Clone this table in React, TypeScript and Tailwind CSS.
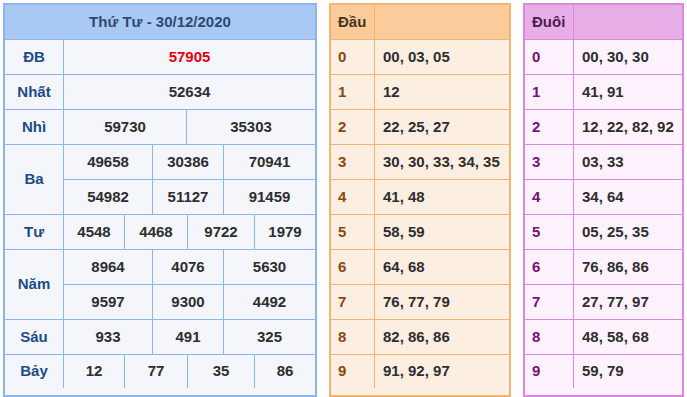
// Kết quả xổ số — Thứ Tư 30/12/2020
const font = { fontFamily: '"Liberation Sans", Arial, sans-serif' };

type Cell = { v: string; w: number };

const rows: { label: string; lines: Cell[][] }[] = [
  { label: "ĐB", lines: [[{ v: "57905", w: 251 }]] },
  { label: "Nhất", lines: [[{ v: "52634", w: 251 }]] },
  { label: "Nhì", lines: [[{ v: "59730", w: 123 }, { v: "35303", w: 128 }]] },
  {
    label: "Ba",
    lines: [
      [{ v: "49658", w: 89 }, { v: "30386", w: 71 }, { v: "70941", w: 91 }],
      [{ v: "54982", w: 89 }, { v: "51127", w: 71 }, { v: "91459", w: 91 }],
    ],
  },
  {
    label: "Tư",
    lines: [[{ v: "4548", w: 61 }, { v: "4468", w: 63 }, { v: "9722", w: 67 }, { v: "1979", w: 60 }]],
  },
  {
    label: "Năm",
    lines: [
      [{ v: "8964", w: 89 }, { v: "4076", w: 71 }, { v: "5630", w: 91 }],
      [{ v: "9597", w: 89 }, { v: "9300", w: 71 }, { v: "4492", w: 91 }],
    ],
  },
  { label: "Sáu", lines: [[{ v: "933", w: 89 }, { v: "491", w: 71 }, { v: "325", w: 91 }]] },
  {
    label: "Bảy",
    lines: [[{ v: "12", w: 61 }, { v: "77", w: 63 }, { v: "35", w: 67 }, { v: "86", w: 60 }]],
  },
];

const dau = ["00, 03, 05", "12", "22, 25, 27", "30, 30, 33, 34, 35", "41, 48", "58, 59", "64, 68", "76, 77, 79", "82, 86, 86", "91, 92, 97"];
const duoi = ["00, 30, 30", "41, 91", "12, 22, 82, 92", "03, 33", "34, 64", "05, 25, 35", "76, 86, 86", "27, 77, 97", "48, 58, 68", "59, 79"];

function ResultTable() {
  return (
    <div className="w-[314px] border-2 border-[#8db5ec] bg-[#f4f6fb] text-[15px] font-bold">
      <div className="h-[35px] flex items-center justify-center bg-[#a9c9f5] border-b border-[#8db5ec] text-[#2d4a70]">
        Thứ Tư - 30/12/2020
      </div>
      {rows.map((r, ri) => (
        <div key={r.label} className={`flex ${ri < rows.length - 1 ? "border-b border-[#8db5ec]" : ""}`}>
          <div className="w-[59px] shrink-0 flex items-center justify-center border-r border-[#8db5ec] text-[#1b4c85]">
            {r.label}
          </div>
          <div className="flex flex-col">
            {r.lines.map((line, li) => (
              <div
                key={li}
                className={`flex ${li < r.lines.length - 1 ? "h-[35px] border-b border-[#8db5ec]" : ri < rows.length - 1 ? "h-[34px]" : "h-[33px]"}`}
              >
                {line.map((c, ci) => (
                  <div
                    key={ci}
                    style={{ width: c.w }}
                    className={`flex items-center justify-center ${ci < line.length - 1 ? "border-r border-[#8db5ec]" : ""} ${r.label === "ĐB" ? "text-[#e3000f]" : "text-[#2e2e2e]"}`}
                  >
                    {c.v}
                  </div>
                ))}
              </div>
            ))}
          </div>
        </div>
      ))}
    </div>
  );
}

function LotoTable({
  title,
  data,
  width,
  labelW,
  border,
  head,
  body,
  digit,
  titleColor,
}: {
  title: string;
  data: string[];
  width: string;
  labelW: string;
  border: string;
  head: string;
  body: string;
  digit: string;
  titleColor: string;
}) {
  return (
    <div className={`${width} border-2 ${border} ${body} text-[15px] font-bold`}>
      <div className={`flex h-[35px] border-b ${border} ${head}`}>
        <div className={`${labelW} shrink-0 border-r ${border} flex items-center pl-[7px] ${titleColor}`}>{title}</div>
        <div className="flex-1" />
      </div>
      {data.map((v, i) => (
        <div key={i} className={`flex ${i < data.length - 1 ? `h-[35px] border-b ${border}` : "h-[33px]"}`}>
          <div className={`${labelW} shrink-0 border-r ${border} flex items-center pl-[7px] ${digit}`}>{i}</div>
          <div className="flex-1 flex items-center pl-[8px] text-[#2e2e2e]">{v}</div>
        </div>
      ))}
    </div>
  );
}

export default function App() {
  return (
    <div style={font} className="w-[687px] h-[397px] bg-white pt-[3px] pl-[3px] flex gap-[12px]">
      <ResultTable />
      <LotoTable
        title="Đầu"
        data={dau}
        width="w-[182px]"
        labelW="w-[44px]"
        border="border-[#f2b574]"
        head="bg-[#fccb9b]"
        body="bg-[#fdeee2]"
        digit="text-[#8a4a0c]"
        titleColor="text-[#4a3220]"
      />
      <LotoTable
        title="Đuôi"
        data={duoi}
        width="w-[161px]"
        labelW="w-[49px]"
        border="border-[#d98ad9]"
        head="bg-[#e8aee8]"
        body="bg-[#fdf2fd]"
        digit="text-[#7a0f7a]"
        titleColor="text-[#4a1f4a]"
      />
    </div>
  );
}
